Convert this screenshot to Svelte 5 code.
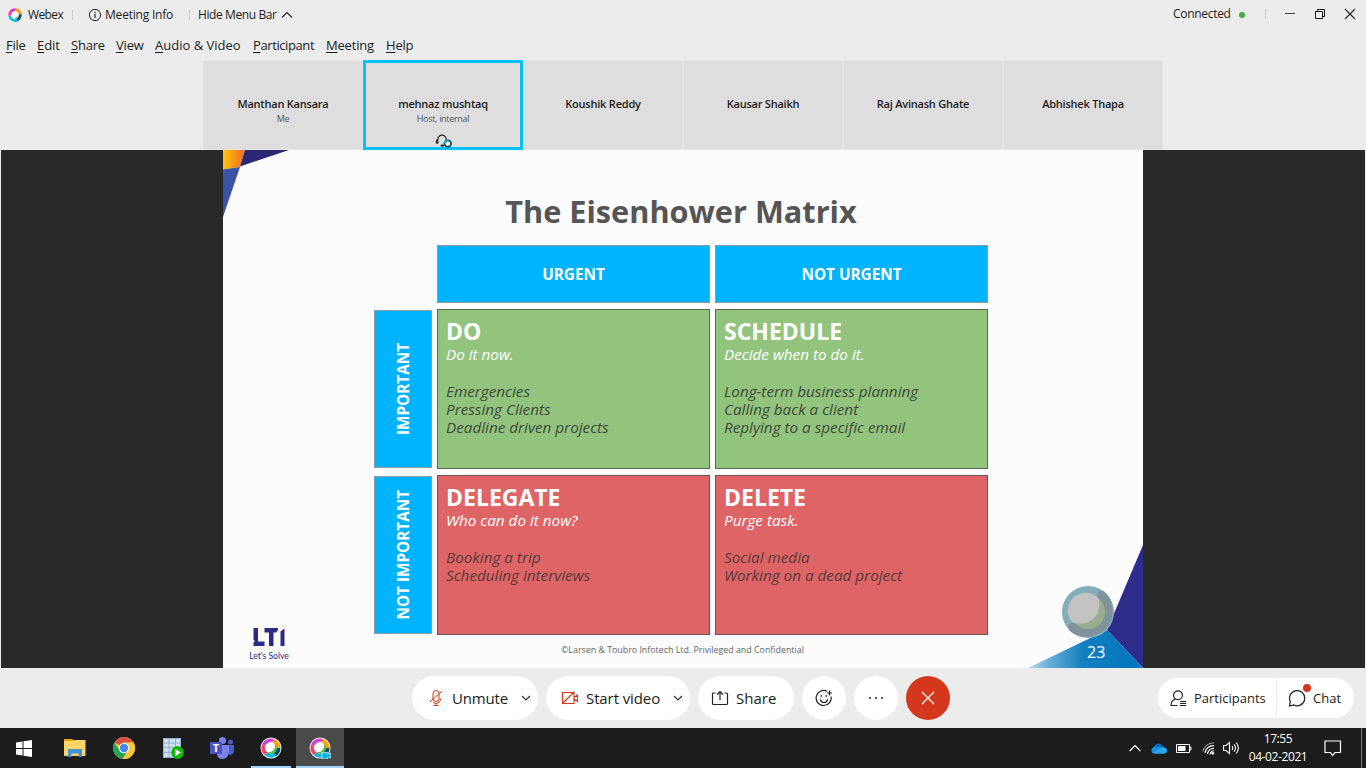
<script>
  const menus = [
    ['File', 31, -0.3], ['Edit', 34, -0.1], ['Share', 45, -0.2], ['View', 39, -0.2],
    ['Audio & Video', 98, 0], ['Participant', 73, -0.4], ['Meeting', 60, -0.2], ['Help', 40, -0.2]
  ];
  const people = [
    { name: 'Manthan Kansara', role: 'Me' },
    { name: 'mehnaz mushtaq', role: 'Host, internal', active: true },
    { name: 'Koushik Reddy' },
    { name: 'Kausar Shaikh' },
    { name: 'Raj Avinash Ghate' },
    { name: 'Abhishek Thapa' }
  ];
  const cells = {
    do: { title: 'DO', lead: 'Do it now.', items: ['Emergencies', 'Pressing Clients', 'Deadline driven projects'] },
    schedule: { title: 'SCHEDULE', lead: 'Decide when to do it.', items: ['Long-term business planning', 'Calling back a client', 'Replying to a specific email'] },
    delegate: { title: 'DELEGATE', lead: 'Who can do it now?', items: ['Booking a trip', 'Scheduling interviews'] },
    remove: { title: 'DELETE', lead: 'Purge task.', items: ['Social media', 'Working on a dead project'] }
  };
</script>

{#snippet ring()}
  <path d="M11.9 2.75A7.5 7.5 0 0 1 17.5 10" stroke="#ff9d0a" />
  <path d="M17.5 10A7.5 7.5 0 0 1 13.75 16.5" stroke="#075267" />
  <path d="M13.75 16.5A7.5 7.5 0 0 1 5.2 15.75" stroke="#07b7da" />
  <path d="M5.2 15.75A7.5 7.5 0 0 1 2.95 7.4" stroke="#ff3d67" />
  <path d="M2.95 7.4A7.5 7.5 0 0 1 11.9 2.75" stroke="#d53ae0" />
{/snippet}

{#snippet quadrant(cell, tone)}
  <section class="cell {tone}">
    <h2>{cell.title}</h2>
    <p class="lead">{cell.lead}</p>
    {#each cell.items as item}<p>{item}</p>{/each}
  </section>
{/snippet}

<div class="app">
  <header class="titlebar">
    <svg class="logo" width="14" height="14" viewBox="0 0 20 20" fill="none" stroke-width="4">
      <circle cx="10" cy="10" r="6" fill="#fff" />
      <path d="M2.5 11A7.5 7.5 0 0 1 6.5 3.4" stroke="#ff3d9a" />
      <path d="M4.5 5A7.5 7.5 0 0 1 11 2.5" stroke="#d53ae0" />
      <path d="M11 2.5A7.5 7.5 0 0 1 17.5 9" stroke="#ff9d0a" />
      <path d="M17.5 9A7.5 7.5 0 0 1 10 17.5" stroke="#075267" />
      <path d="M13 16.9A7.5 7.5 0 0 1 2.5 11" stroke="#07c2e6" />
      <path d="M15 6q1 7-7 8.500 5 1 7-3z" fill="#5dbd43" />
    </svg>
    <span class="t webex">Webex</span>
    <i class="sep"></i>
    <svg class="info" width="14" height="14" viewBox="0 0 14 14" fill="none" stroke="#222" stroke-width="1">
      <circle cx="7" cy="7" r="5.6" /><path d="M7 6v4M7 3.8v1.1" stroke-width="1.2" />
    </svg>
    <span class="t minfo">Meeting Info</span>
    <i class="sep"></i>
    <span class="t hide">Hide Menu Bar</span>
    <svg width="12" height="14" viewBox="0 0 12 14" fill="none" stroke="#222" stroke-width="1.1"><path d="M1 9.5 6 4.5l5 5" /></svg>
    <div class="right">
      <span class="t conn">Connected</span>
      <i class="dot"></i>
      <i class="sep"></i>
      <svg width="12" height="12" viewBox="0 0 12 12"><path d="M1 5.5h10" stroke="#444" /></svg>
      <svg width="12" height="12" viewBox="0 0 12 12" fill="none" stroke="#111"><path d="M1.5 3.5h7v7h-7zM3.5 3.5v-2h7v7h-2" /></svg>
      <svg width="12" height="12" viewBox="0 0 12 12" fill="none" stroke="#222" stroke-width="1.1"><path d="m1 1 10 10M11 1 1 11" /></svg>
    </div>
  </header>

  <nav class="menubar">
    {#each menus as [label, width, track]}
      <span style="width:{width}px;letter-spacing:{track}px"><u>{label[0]}</u>{label.slice(1)}</span>
    {/each}
  </nav>

  <div class="strip">
    {#each people as p}
      <div class="tile" class:active={p.active}>
        <b>{p.name}</b>
        {#if p.role}<small>{p.role}</small>{/if}
        {#if p.active}
          <svg width="18" height="14" viewBox="0 0 18 14" fill="none">
            <path d="M2.800 9.5V5.4a4.200 4.200 0 0 1 8.400 0V7M2.800 5.6C.8 6 .8 9.3 2.800 9.5" stroke="#222" stroke-width="1.2" />
            <ellipse cx="7.3" cy="11.6" rx="1.8" ry="1.2" fill="#222" />
            <circle cx="12.8" cy="9.6" r="3.3" fill="#fff" stroke="#075267" stroke-width="1.8" />
            <path d="M9.5 9.6a3.3 3.3 0 0 1 3.3-3.3" stroke="#07a9d0" stroke-width="1.8" />
            <path d="M15.100 8.5a3 3 0 0 1-3 3.600h3z" fill="#5aa832" />
          </svg>
        {/if}
      </div>
    {/each}
  </div>

  <main class="stage">
    <div class="slide">
      <svg class="decor" width="920" height="518" viewBox="0 0 920 518">
        <defs>
          <linearGradient id="gold" x1="0" x2="1"><stop offset="0" stop-color="#fcc50d" /><stop offset="1" stop-color="#f36a21" /></linearGradient>
          <linearGradient id="sea" x1="0" x2="1"><stop offset="0" stop-color="#b5dced" /><stop offset=".2" stop-color="#62acd6" /><stop offset=".48" stop-color="#137fc1" /><stop offset="1" stop-color="#0074bd" /></linearGradient>
        </defs>
        <path d="M0 0h22l-5 17-17 2.6z" fill="url(#gold)" />
        <path d="M22 0h44L17 16.5z" fill="#2a2875" />
        <path d="M0 19.6 17 17 0 67z" fill="#3a53a4" />
        <path d="M920 395v123l-36-38z" fill="#2e2c8a" />
        <path d="M805 518l79-38 36 38z" fill="url(#sea)" />
        <circle cx="865" cy="462" r="26" fill="#82adb9" />
        <path d="M878.8 445.5A21.500 21.500 0 0 1 849.800 477.200" fill="none" stroke="#81929a" stroke-width="9" stroke-linecap="round" />
        <circle cx="865" cy="462" r="17" fill="#99ae8e" />
        <path d="M876 449q2 15-7 21-9 6-20 2a17 17 0 0 1 27-23z" fill="#c3c3c4" />
      </svg>

      <div class="content">
        <h1>The Eisenhower Matrix</h1>
        <div class="matrix">
          <div></div>
          <div class="head">URGENT</div>
          <div class="head">NOT URGENT</div>
          <div class="head side"><span>IMPORTANT</span></div>
          {@render quadrant(cells.do, 'green')}
          {@render quadrant(cells.schedule, 'green')}
          <div class="head side"><span>NOT IMPORTANT</span></div>
          {@render quadrant(cells.delegate, 'red')}
          {@render quadrant(cells.remove, 'red')}
        </div>
        <footer>
          <div class="lti">
            <svg width="34" height="19" viewBox="0 0 34 19" fill="#2c2a86" role="img" aria-label="LTI">
              <path d="M1.500 0H6v13.500h6.500V18h-11v-3.500L3 13l-1.500-1z" /><path d="M12.500 0H26v2l-2 2.500h-2.500V18H17V4.500h-4.500z" /><path d="M28.500 3.500 32.500.5V18h-4z" />
            </svg>
            <span>Let's Solve</span>
          </div>
          <span class="copy">©Larsen &amp; Toubro Infotech Ltd. Privileged and Confidential</span>
          <span class="page">23</span>
        </footer>
      </div>
    </div>
  </main>

  <div class="controls">
    <div class="center">
      <button class="pill unmute">
        <svg width="14" height="18" viewBox="0 0 14 18" fill="none" stroke="#d4371c"><path d="M4 10.500V4.500a3 3 0 0 1 6 0v5a3 3 0 0 1-6 0M4 13.500q3 2 6 0 1.500-1.500 1.500-4M7 14.500v2M4.500 16.500h5M1 13 12.500 2.500" /></svg>
        <span>Unmute</span>
        <svg width="10" height="8" viewBox="0 0 10 8" fill="none" stroke="#333" stroke-width="1.2"><path d="m1 2 4 4 4-4" /></svg>
      </button>
      <button class="pill video">
        <svg width="18" height="16" viewBox="0 0 18 16" fill="none" stroke="#d4371c" stroke-width="1.1"><path d="M1.500 2.500h11.500v11H1.500zM1 14 13 2M13 7.500l3.500-2.500v6.500L13 9" /></svg>
        <span>Start video</span>
        <svg width="10" height="8" viewBox="0 0 10 8" fill="none" stroke="#333" stroke-width="1.2"><path d="m1 2 4 4 4-4" /></svg>
      </button>
      <button class="pill share">
        <svg width="18" height="16" viewBox="0 0 18 16" fill="none" stroke="#222" stroke-width="1.2"><path d="M4.500 3H2.500Q1.500 3 1.500 4v9.500q0 1 1 1h13q1 0 1-1V4q0-1-1-1h-2M9 10V2M6 4.500l3-3 3 3" /></svg>
        <span>Share</span>
      </button>
      <button class="round">
        <svg width="18" height="18" viewBox="0 0 18 18" fill="none" stroke="#222" stroke-width="1.2"><path d="M12 2.300A7.500 7.500 0 1 0 16 7.500M5.200 10.500q1 3 3.800 3t3.800-3M14.500 1.500v5M12 4h5" /><path d="M5.500 7h1.600M10.500 7h1.600" stroke-width="1.6" /></svg>
      </button>
      <button class="round">
        <svg width="16" height="4" viewBox="0 0 16 4" fill="#222"><circle cx="2" cy="2" r="1" /><circle cx="8" cy="2" r="1" /><circle cx="14" cy="2" r="1" /></svg>
      </button>
      <button class="round end">
        <svg width="14" height="14" viewBox="0 0 14 14" stroke="#fff" stroke-width="1.2"><path d="m1 1 12 12M13 1 1 13" /></svg>
      </button>
    </div>
    <div class="panels">
      <button class="parts">
        <svg width="17" height="17" viewBox="0 0 17 17" fill="none" stroke="#222" stroke-width="1.2"><circle cx="8" cy="5.2" r="4.4" /><path d="M5.500 9Q1 10.500 1 15.500h6.500M10 11.500h6M10 13.500h6M10 15.500h6" /></svg>
        <span>Participants</span>
      </button>
      <button class="chat">
        <svg width="18" height="18" viewBox="0 0 18 18" fill="none" stroke="#222" stroke-width="1.2"><path d="M2.300 12.500A7.600 7.600 0 1 1 5.800 16L1.500 17z" /></svg>
        <i></i>
        <span>Chat</span>
      </button>
    </div>
  </div>

  <div class="taskbar">
    <div class="app-btn">
      <svg width="16" height="17" viewBox="0 0 16 17" fill="#fff"><path d="M0 2.500 6.500 1.500V8H0zM7.500 1.300 16 0v8H7.500zM0 9h6.500v6.500L0 14.500zM7.500 9H16v8l-8.500-1.300z" /></svg>
    </div>
    <div class="app-btn">
      <svg width="22" height="18" viewBox="0 0 22 18"><path d="M0 0h8.500l1.500 2H0z" fill="#e6a10a" /><path d="M0 2h9l1-1h11.500v16H0z" fill="#fed467" /><path d="M4 18v-8h14v8h-3.500v-3.500h-7V18z" fill="#3f94d4" /></svg>
    </div>
    <div class="app-btn">
      <svg width="24" height="24" viewBox="0 0 24 24">
        <circle cx="12" cy="12" r="11" fill="#fcc934" />
        <path d="M12 12 2.500 6.500A11 11 0 0 1 21.500 6.500L12 7z" fill="#d94f43" />
        <path d="M2.500 6.500A11 11 0 0 0 10.500 22.900L16.300 14.500 7.700 14.500z" fill="#24a35a" />
        <path d="M21.500 6.500H12v5.500l4.300 2.500-5.800 8.400A11 11 0 0 0 21.500 6.500z" fill="#fcc934" />
        <circle cx="12" cy="12" r="5.2" fill="#fff" /><circle cx="12" cy="12" r="4.2" fill="#4887f2" />
      </svg>
    </div>
    <div class="app-btn">
      <svg width="22" height="22" viewBox="0 0 22 22"><path d="M1 1h18v20H1z" fill="#8fb2d4" /><path d="M2 2h4.500v3.500H2zM7.500 2H13v3.500H7.500zM14 2h4v3.500h-4zM2 6.500h4.500V10H2zM7.500 6.500H13V10H7.500zM14 6.500h4V10h-4zM2 11h4.500v4H2zM7.500 11H13v4H7.500zM2 16h4.500v4H2zM7.500 16H13v4H7.500z" fill="#d1e0ef" /><circle cx="15.5" cy="15.5" r="6.4" fill="#13b90a" /><path d="m13.500 12 5.500 3.500-5.500 3.500z" fill="#fff" /></svg>
    </div>
    <div class="app-btn">
      <svg width="24" height="22" viewBox="0 0 24 22"><circle cx="12.5" cy="3.5" r="3.5" fill="#7b83eb" /><circle cx="20.5" cy="5" r="2.5" fill="#5059c9" /><path d="M15 8h9v6q0 4-5 4z" fill="#5059c9" /><path d="M7 8h12v7q-1 7-6.500 7T7 16z" fill="#7b83eb" /><path d="M0 5h12v12H0z" fill="#4b53bc" /><text x="6" y="15" text-anchor="middle" font-family="Open Sans, sans-serif" font-size="11" font-weight="700" fill="#fff">T</text></svg>
    </div>
    {#each [false, true] as current}
      <div class="app-btn open" class:current>
        <svg width="24" height="22" viewBox="0 0 24 22" fill="none">
          <circle cx="12" cy="11" r="10.5" fill="#f5f5f5" />
          <g transform="translate(2 1)" stroke-width="4">{@render ring()}</g>
          <circle cx="12" cy="11" r="5.800" fill="#5dbd43" /><ellipse cx="11" cy="10" rx="4.6" ry="5.6" transform="rotate(40 11 10)" fill="#fff" />
          {#if current}<path d="M14 15.500h5.500v1.500l3-1v5l-3-.5v1.500H14z" fill="#05b4e3" stroke="#d9f5ff" stroke-width=".7" />{/if}
        </svg>
      </div>
    {/each}
    <div class="tray">
      <svg width="12" height="8" viewBox="0 0 12 8" fill="none" stroke="#fff" stroke-width="1.2"><path d="M.7 7 6 1.500 11.300 7" /></svg>
      <svg class="cloud" width="16" height="11" viewBox="0 0 16 11"><path d="M3.500 9A3.500 3.500 0 0 1 3.500 3 5 5 0 0 1 12.500 4L8 8z" fill="#0768bf" /><path d="M1 9.500C-1 6 2 4 5 4l7.500.2C17 4.500 17 10.500 13 10.500H3q-1.500 0-2-1z" fill="#1390df" /><path d="m2 10.200 9-6C16.500 3.500 17.500 10.500 13 10.500H3z" fill="#2aa8ed" /></svg>
      <svg class="bat" width="16" height="9" viewBox="0 0 16 9" fill="none" stroke="#fff"><path d="M.5.5h13v8H.5zM13.500 3h1.500v3h-1.500" /><path d="M2 2h7.500v5H2z" fill="#fff" stroke="none" /></svg>
      <svg class="wifi" width="13" height="13" viewBox="0 0 13 13" fill="none" stroke="#fff" stroke-width="1.1"><path d="M.8 9.500A10.500 10.500 0 0 1 12 1" stroke="#999" /><path d="M3 11A8.500 8.500 0 0 1 12 3.600M5.500 12a6.500 6.500 0 0 1 6.500-5.800M8 12.500q.5-3.500 4-3.800" /><circle cx="10.8" cy="11.3" r="1.4" fill="#fff" stroke="none" /></svg>
      <svg class="vol" width="17" height="14" viewBox="0 0 17 14" fill="none" stroke="#fff" stroke-width="1.1"><path d="M.6 4.500h2.500L6.500 1.500v11L3.100 9.500H.6zM9 5q1.500 2 0 4M11 3.300q3 3.700 0 7.400M13.200 1.500q4.400 5.500 0 11" /></svg>
      <div class="clock"><span>17:55</span><span>04-02-2021</span></div>
      <svg class="note" width="18" height="17" viewBox="0 0 18 17" fill="none" stroke="#fff" stroke-width="1.2"><path d="M1 1h15.500v11.500H11L8.500 15.500 6.500 12.500H1z" /></svg>
      <i></i>
    </div>
  </div>
</div>

<style>
  :global(body) { margin: 0; background: #ececec; overflow: hidden; }
  .app { width: 1366px; height: 768px; display: flex; flex-direction: column; background: #ececec; color: #1c1c1c; font-family: "Open Sans", "Noto Sans", sans-serif; }
  svg { display: block; flex: none; }
  i { display: block; flex: none; }
  p, h1, h2 { margin: 0; }
  button { border: 0; padding: 0; background: #fff; color: #1c1c1c; font: 15px/20px "Open Sans", sans-serif; display: flex; align-items: center; box-sizing: border-box; text-align: left; }
  span { white-space: nowrap; }

  .titlebar { height: 30px; display: flex; align-items: center; font-size: 12px; flex: none; box-sizing: border-box; }
  .t { flex: none; padding-bottom: 1px; }
  .logo { margin: 0 6px 0 8px; }
  .sep { width: 1px; height: 10px; background: #ccc; }
  .webex { width: 44px; letter-spacing: -.6px; }
  .info { margin: 0 3px 0 15px; }
  .minfo { width: 84px; letter-spacing: -.2px; }
  .hide { width: 83px; margin-left: 8px; letter-spacing: -.4px; }
  .right { margin-left: auto; display: flex; align-items: center; padding: 0 10px 3px 0; }
  .conn { width: 66px; letter-spacing: -.3px; padding: 0; }
  .dot { width: 6px; height: 6px; border-radius: 50%; background: #3fae3f; margin: 3px 20px 0 0; }
  .right .sep { margin-right: 18px; }
  .right svg + svg { margin-left: 18px; }

  .menubar { height: 30px; display: flex; align-items: center; padding-left: 6px; font-size: 13px; flex: none; box-sizing: border-box; }
  .menubar span { flex: none; }
  .menubar u { text-underline-offset: 2px; }

  .strip { height: 90px; margin-left: 203px; display: flex; flex: none; }
  .tile { width: 160px; height: 90px; box-sizing: border-box; border: 1px solid #e6e6e6; background: #dedede; display: flex; flex-direction: column; align-items: center; padding-top: 35px; }
  .tile b { font: 600 11px/16px "Open Sans", sans-serif; letter-spacing: -.22px; }
  .tile small { font-size: 9px; line-height: 14px; color: #555; letter-spacing: -.3px; }
  .tile svg { margin: 8px 0 0 1px; }
  .tile.active { border: 3px solid #06c1f7; padding-top: 33px; }

  .stage { height: 518px; flex: none; margin: 0 1px; background: #292929; display: flex; padding-left: 222px; }
  .slide { width: 920px; height: 518px; position: relative; background: #fcfcfd; overflow: hidden; }
  .decor { position: absolute; left: 0; top: 0; }
  .content { position: relative; }
  h1 { font-size: 30.7px; line-height: 42px; height: 55px; padding: 40px 0 0; text-align: center; color: #555; margin-left: -4px; }
  .matrix { margin-left: 151px; display: grid; grid-template-columns: 58px 273px 273px; grid-template-rows: 58px 160px 160px; column-gap: 5px; row-gap: 6px; }
  .head { background: #00b3ff; border: 1px solid #8c9aa3; color: #fff; font-weight: 700; font-size: 15.3px; display: flex; align-items: center; justify-content: center; box-sizing: border-box; padding-bottom: 1px; }
  .side { margin: 1px 0; padding: 0; }
  .side span { writing-mode: vertical-rl; transform: rotate(180deg); }
  .cell { box-sizing: border-box; border: 1px solid #59675a; padding: 6px 8px; color: #3d4a3c; font-style: italic; font-size: 15.25px; line-height: 18px; }
  .cell h2 { color: #fff; font-style: normal; font-size: 23px; line-height: 30px; }
  .cell .lead { color: #fff; margin: -1px 0 19px; }
  .green { background: #92c47d; }
  .red { background: #df6466; color: #543c39; border-color: #6b5450; }
  footer { display: flex; height: 33px; align-items: flex-start; }
  .lti { width: 50px; margin: -7px 5px 0 21px; display: flex; flex-direction: column; align-items: center; color: #2c2a86; }
  .lti span { font: 8.6px/13px Lato, sans-serif; margin-top: 3px; }
  .copy { font-size: 8.85px; line-height: 14px; color: #666; margin: 8px 0 0 262px; width: 243px; }
  .page { color: #fff; font-size: 16px; line-height: 22px; margin: 6px 0 0 283px; }

  .controls { height: 60px; flex: none; display: flex; align-items: center; padding: 0 12px 0 412px; justify-content: space-between; }
  .center { display: flex; gap: 8px; }
  .pill { height: 44px; border-radius: 22px; }
  .unmute { width: 126px; padding-left: 17px; }
  .unmute span { width: 69px; margin-left: 9px; letter-spacing: -.15px; }
  .video { width: 144px; padding-left: 15px; }
  .video span { width: 87px; margin-left: 7px; letter-spacing: -.1px; }
  .share { width: 96px; padding-left: 13px; }
  .share span { margin-left: 7px; }
  .round { width: 44px; height: 44px; border-radius: 50%; justify-content: center; }
  .end { background: #d4371c; }
  .panels { display: flex; gap: 1px; }
  .panels button { height: 40px; font-size: 13px; }
  .parts { width: 118px; border-radius: 20px 0 0 20px; padding-left: 12px; }
  .parts span { margin-left: 7px; }
  .chat { width: 77px; border-radius: 0 20px 20px 0; padding-left: 11px; position: relative; }
  .chat i { position: absolute; left: 26px; top: 6px; width: 8px; height: 8px; border-radius: 50%; background: #d4371c; }
  .chat span { margin-left: 7px; }

  .taskbar { height: 40px; flex: none; background: #1c1c1c; display: flex; color: #fff; }
  .app-btn { width: 48px; height: 40px; margin-right: 1px; display: flex; align-items: center; justify-content: center; box-sizing: border-box; }
  .app-btn:nth-child(2) { margin-left: 2px; }
  .open { border-bottom: 2px solid #a5d4fb; width: 40px; margin-left: 4px; padding-top: 2px; margin-right: 0; }
  .open.current { width: 48px; background: #4a4a4a; margin-left: 5px; }
  .tray { margin-left: auto; display: flex; align-items: center; }
  .cloud { margin-left: 10px; }
  .bat { margin-left: 9px; }
  .wifi { margin-left: 10px; }
  .vol { margin-left: 8px; }
  .clock { width: 66px; margin-left: 5px; display: flex; flex-direction: column; align-items: center; font-size: 12px; line-height: 18px; letter-spacing: -.4px; }
  .note { margin-left: 13px; }
  .tray i { width: 1px; height: 40px; background: #777; margin: 0 4px 0 19px; }
</style>
